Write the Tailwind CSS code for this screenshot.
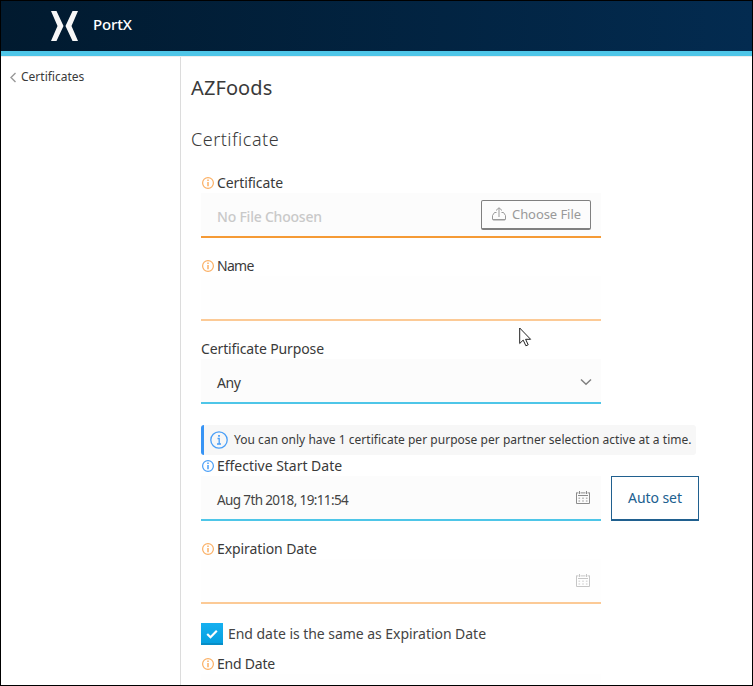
<!DOCTYPE html>
<html lang="en">
<head>
<meta charset="utf-8">
<title>PortX</title>
<script src="https://cdn.jsdelivr.net/npm/@tailwindcss/browser@4"></script>
</head>
<body class="bg-white">
<svg class="hidden">
  <symbol id="info" viewBox="0 0 12 12"><circle cx="6" cy="6" r="5.4" fill="none" stroke="currentColor" stroke-width="1.2"/><path d="M6 5v4.200M6 2.600v1.400" stroke="currentColor" stroke-width="1.5"/></symbol>
  <symbol id="calendar" viewBox="0 0 14 14"><path d="M.5 2v10.500h13V2M0 1.900h2.500M4.500 1.900h5M11.500 1.900H14M3.500 0v3M10.500 0v3M2 4.500h10" fill="none" stroke="currentColor"/><path d="M2.500 7.200h9M2.500 10h9" stroke="currentColor" stroke-width="1.6" stroke-dasharray="1.6 2.1" opacity=".6"/></symbol>
</svg>
<div class="relative flex h-[686px] w-[753px] flex-col overflow-hidden border border-black bg-white font-['Noto_Sans',sans-serif] text-sm text-[#3a3a3a]">
  <header class="flex h-[55px] shrink-0 items-start border-b-[5px] border-[#4ec6e8] bg-linear-to-r from-[#011a2f] to-[#032b50] pl-[50px]">
    <svg class="mt-[10px] h-[30px] w-[27px]" viewBox="0 0 27 30" fill="#f7f7f7"><path d="M0 0h5.500l7 15-7 15H0l6.500-15zM27 0h-5.500l-7 15 7 15H27l-6.500-15z"/></svg>
    <span class="ml-[15px] mt-[13px] text-[15px] font-medium leading-5 tracking-[-0.14px] text-white">PortX</span>
  </header>
  <div class="flex min-h-0 grow border-t border-[#eee]">
    <nav class="flex w-[180px] shrink-0 items-start border-r border-[#dcdcdc] pl-2 pt-[10px]">
      <svg class="mt-[5px] h-[11px] w-[8px]" viewBox="0 0 8 11" fill="none" stroke="#999" stroke-width="1.4"><path d="M6.5 1 2 5.5 6.5 10"/></svg>
      <span class="ml-1 text-xs leading-5">Certificates</span>
    </nav>
    <main class="flex grow flex-col pl-[10px]">
      <h1 class="mt-[17px] text-[20px] leading-[28px] tracking-[0.1px]">AZFoods</h1>
      <h2 class="mt-[24px] text-[18px] font-light leading-[26px] tracking-[0.5px]">Certificate</h2>
      <form class="mt-[21px] flex w-[500px] flex-col pl-[10px]">
        <label class="flex h-5 items-center leading-5 tracking-[-0.11px]"><svg class="ml-px mr-[3px] size-3 text-[#fbb065]"><use href="#info"/></svg>Certificate</label>
        <div class="flex h-[45px] w-[400px] items-center justify-between border-b-2 border-[#f59a35] bg-[#fcfcfc] pl-4 pr-[10px]">
          <span class="mt-[5px] font-medium tracking-[-0.22px] text-[#c9c9c9]">No File Choosen</span>
          <button type="button" class="flex h-[30px] w-[110px] items-center rounded-[2px] border border-b-2 border-[#808080] pl-[10px] text-[13px] tracking-[-0.07px] text-[#999]">
            <svg class="mr-[6px] h-[14px] w-[14px] shrink-0" viewBox="0 0 14 14" fill="none" stroke="#999"><path d="M4.500 5.500H2.500L.500 8.500v3.500q0 1 1 1h11q1 0 1-1V8.500l-2-3h-2M7 10V1M4 3.500 7 .700l3 2.800M1 12.500h12"/></svg><span class="whitespace-nowrap">Choose File</span>
          </button>
        </div>
        <label class="mt-[18px] flex h-5 items-center leading-5 tracking-[-0.7px]"><svg class="ml-px mr-[3px] size-3 text-[#fbb065]"><use href="#info"/></svg>Name</label>
        <div class="h-[45px] w-[400px] border-b-2 border-[#fcca96] bg-[#fefefe]"></div>
        <label class="mt-[18px] h-5 leading-5 tracking-[-0.13px]">Certificate Purpose</label>
        <div class="flex h-[45px] w-[400px] items-center justify-between border-b-2 border-[#4ec6e8] bg-[#fcfcfc] pl-4 pr-[9px]">
          <span class="mt-[5px] tracking-[-0.4px]">Any</span>
          <svg class="mt-[2px] h-[8px] w-[12px]" viewBox="0 0 12 8" fill="none" stroke="#808080" stroke-width="1.500"><path d="M1 1.500 6 6.300l5-4.800"/></svg>
        </div>
        <div class="mt-[21px] flex h-[30px] w-[495px] items-center rounded-[3px] border-l-[3px] border-[#3794f5] bg-[#f7f7f7] pl-[6px]">
          <svg class="mr-[6px] size-[18px] shrink-0 text-[#4a9ff7]" viewBox="0 0 18 18" fill="none" stroke="currentColor"><circle cx="9" cy="9" r="8.200" stroke-width="1.300"/><path d="M7.500 7.500h1.700v5M7 13h4" stroke-width="1.300"/><path d="M9 4v1.800" stroke-width="1.800"/></svg>
          <span class="whitespace-nowrap text-xs tracking-[0.03px]">You can only have 1 certificate per purpose per partner selection active at a time.</span>
        </div>
        <label class="mt-px flex h-5 items-center leading-5 tracking-[-0.02px]"><svg class="ml-px mr-[3px] size-3 text-[#4a9ff7]"><use href="#info"/></svg>Effective Start Date</label>
        <div class="flex gap-[10px]">
          <div class="flex h-[45px] w-[400px] shrink-0 items-center justify-between border-b-2 border-[#4ec6e8] bg-[#fcfcfc] pl-4 pr-[11px]">
            <span class="mt-[6px] text-[13.500px] tracking-[-0.62px] text-[#444]">Aug 7th 2018, 19:11:54</span>
            <svg class="size-[14px] text-[#8c8c8c]"><use href="#calendar"/></svg>
          </div>
          <button type="button" class="h-[45px] w-[88px] shrink-0 border border-b-2 border-[#20608f] tracking-[-0.06px] text-[#20608f]">Auto set</button>
        </div>
        <label class="mt-[18px] flex h-5 items-center leading-5 tracking-[-0.09px]"><svg class="ml-px mr-[3px] size-3 text-[#fbb065]"><use href="#info"/></svg>Expiration Date</label>
        <div class="flex h-[45px] w-[400px] items-center justify-end border-b-2 border-[#fcca96] bg-[#fefefe] pr-[11px]">
          <svg class="size-[14px] text-[#c6c6c6]"><use href="#calendar"/></svg>
        </div>
        <label class="mt-[19px] flex h-[22px] items-center tracking-[-0.04px] text-[#444]">
          <span class="mr-[5px] flex size-[22px] items-center justify-center border-b-2 border-[#078dc6] bg-linear-to-b from-[#16b0f0] to-[#06a0e0]"><svg class="mt-px h-[10px] w-[12px]" viewBox="0 0 12 10" fill="none" stroke="#fff" stroke-width="2.200"><path d="M1.200 5 4.500 8.200l6.300-6.400"/></svg></span>End date is the same as Expiration Date</label>
        <label class="mt-[9px] flex h-5 items-center leading-5 tracking-[-0.22px]"><svg class="ml-px mr-[3px] size-3 text-[#fbb065]"><use href="#info"/></svg>End Date</label>
        <div class="h-[45px] w-[400px] shrink-0 border-b-2 border-[#fcca96] bg-[#fefefe]"></div>
      </form>
    </main>
  </div>
  <svg class="absolute left-[518px] top-[326px] h-[20px] w-[13px]" viewBox="0 0 13 20" fill="#fff" stroke="#222" stroke-width="1"><path d="M.7 1v15.500l3.500-3.400 2.700 5.700 2.300-1-2.600-5.500h5z"/></svg>
</div>
</body>
</html>
